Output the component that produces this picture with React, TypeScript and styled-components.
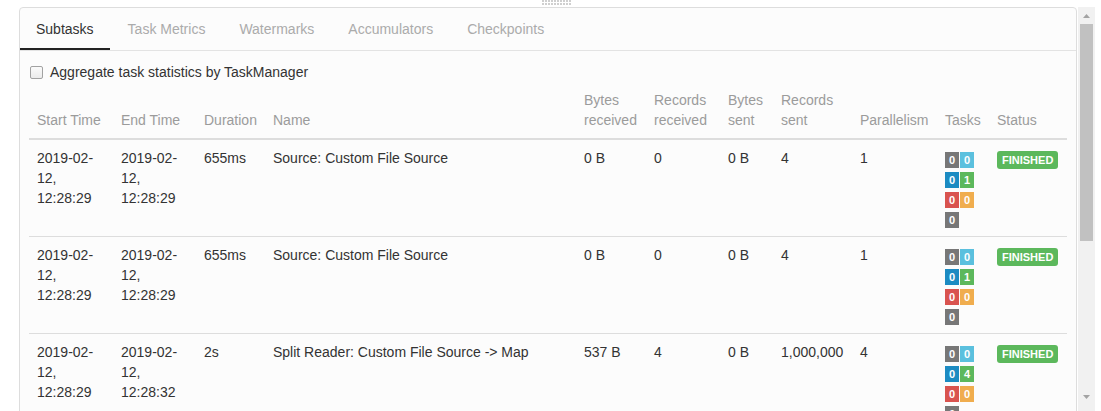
import styled, { createGlobalStyle } from "styled-components";

const GlobalStyle = createGlobalStyle`
  html, body {
    margin: 0;
    padding: 0;
    background: #ffffff;
  }
  body {
    font-family: "Liberation Sans", Arial, sans-serif;
    font-size: 14px;
    color: #333333;
  }
`;

type TaskCount = { color: string; value: number };

type Subtask = {
  start: string[];
  end: string[];
  duration: string;
  name: string;
  bytesIn: string;
  recordsIn: string;
  bytesOut: string;
  recordsOut: string;
  parallelism: string;
  tasks: TaskCount[];
  status: string;
};

const GRAY = "#777777";
const INFO = "#5bc0de";
const BLUE = "#1c8bc2";
const GREEN = "#5cb85c";
const RED = "#d9534f";
const ORANGE = "#f0ad4e";

const taskCounts = (running: number): TaskCount[] => [
  { color: GRAY, value: 0 },
  { color: INFO, value: 0 },
  { color: BLUE, value: 0 },
  { color: GREEN, value: running },
  { color: RED, value: 0 },
  { color: ORANGE, value: 0 },
  { color: GRAY, value: 0 },
];

const tabs: string[] = [
  "Subtasks",
  "Task Metrics",
  "Watermarks",
  "Accumulators",
  "Checkpoints",
];

const columns: { label: string[]; width: number }[] = [
  { label: ["Start Time"], width: 84 },
  { label: ["End Time"], width: 83 },
  { label: ["Duration"], width: 69 },
  { label: ["Name"], width: 311 },
  { label: ["Bytes", "received"], width: 70 },
  { label: ["Records", "received"], width: 74 },
  { label: ["Bytes", "sent"], width: 53 },
  { label: ["Records", "sent"], width: 79 },
  { label: ["Parallelism"], width: 85 },
  { label: ["Tasks"], width: 52 },
  { label: ["Status"], width: 78 },
];

const subtasks: Subtask[] = [
  {
    start: ["2019-02-", "12,", "12:28:29"],
    end: ["2019-02-", "12,", "12:28:29"],
    duration: "655ms",
    name: "Source: Custom File Source",
    bytesIn: "0 B",
    recordsIn: "0",
    bytesOut: "0 B",
    recordsOut: "4",
    parallelism: "1",
    tasks: taskCounts(1),
    status: "FINISHED",
  },
  {
    start: ["2019-02-", "12,", "12:28:29"],
    end: ["2019-02-", "12,", "12:28:29"],
    duration: "655ms",
    name: "Source: Custom File Source",
    bytesIn: "0 B",
    recordsIn: "0",
    bytesOut: "0 B",
    recordsOut: "4",
    parallelism: "1",
    tasks: taskCounts(1),
    status: "FINISHED",
  },
  {
    start: ["2019-02-", "12,", "12:28:29"],
    end: ["2019-02-", "12,", "12:28:32"],
    duration: "2s",
    name: "Split Reader: Custom File Source -> Map",
    bytesIn: "537 B",
    recordsIn: "4",
    bytesOut: "0 B",
    recordsOut: "1,000,000",
    parallelism: "4",
    tasks: taskCounts(4),
    status: "FINISHED",
  },
];

function Grip() {
  const dots = [];
  for (let r = 0; r < 2; r++) {
    for (let c = 0; c < 10; c++) {
      dots.push(
        <rect key={`${r}-${c}`} x={c * 3} y={r * 3} width={2} height={2} fill="#cfcfcf" />
      );
    }
  }
  return (
    <GripSvg width="30" height="5" viewBox="0 0 30 5">
      {dots}
    </GripSvg>
  );
}

function Arrow({ up }: { up: boolean }) {
  return (
    <svg width="7" height="4" viewBox="0 0 7 4">
      <polygon points={up ? "0,4 7,4 3.5,0" : "0,0 7,0 3.5,4"} fill="#a3a3a3" />
    </svg>
  );
}

export default function App() {
  return (
    <>
      <GlobalStyle />
      <Page>
        <HandleRow>
          <Grip />
        </HandleRow>
        <Body>
          <Viewport>
            <Panel>
              <TabBar>
                {tabs.map((tab, i) => (
                  <Tab key={tab} active={i === 0}>
                    {tab}
                  </Tab>
                ))}
              </TabBar>

              <Content>
                <CheckRow>
                  <CheckBox type="checkbox" />
                  <span>Aggregate task statistics by TaskManager</span>
                </CheckRow>

                <Table>
                  <colgroup>
                    {columns.map((col, i) => (
                      <col key={i} style={{ width: col.width }} />
                    ))}
                  </colgroup>
                  <thead>
                    <tr>
                      {columns.map((col, i) => (
                        <Th key={i}>
                          {col.label.map((line) => (
                            <Line key={line}>{line}</Line>
                          ))}
                        </Th>
                      ))}
                    </tr>
                  </thead>
                  <tbody>
                    {subtasks.map((row, i) => (
                      <Tr key={i}>
                        <Td>
                          {row.start.map((line) => (
                            <Line key={line}>{line}</Line>
                          ))}
                        </Td>
                        <Td>
                          {row.end.map((line) => (
                            <Line key={line}>{line}</Line>
                          ))}
                        </Td>
                        <Td>{row.duration}</Td>
                        <Td>{row.name}</Td>
                        <Td>{row.bytesIn}</Td>
                        <Td>{row.recordsIn}</Td>
                        <Td>{row.bytesOut}</Td>
                        <Td>{row.recordsOut}</Td>
                        <Td>{row.parallelism}</Td>
                        <Td>
                          <TaskGrid>
                            {row.tasks.map((t, j) => (
                              <TaskBadge key={j} color={t.color}>
                                {t.value}
                              </TaskBadge>
                            ))}
                          </TaskGrid>
                        </Td>
                        <Td>
                          <StatusBadge>{row.status}</StatusBadge>
                        </Td>
                      </Tr>
                    ))}
                  </tbody>
                </Table>
              </Content>
            </Panel>
          </Viewport>

          <ScrollBar>
            <ScrollButton>
              <Arrow up />
            </ScrollButton>
            <ScrollTrack>
              <Thumb />
            </ScrollTrack>
            <ScrollButton>
              <Arrow up={false} />
            </ScrollButton>
          </ScrollBar>
        </Body>
      </Page>
    </>
  );
}

// Styled Components

const Page = styled.div`
  width: 1101px;
  height: 411px;
  display: flex;
  flex-direction: column;
  overflow: hidden;
  background: #ffffff;
`;

const HandleRow = styled.div`
  height: 7px;
  flex: 0 0 7px;
  display: flex;
  align-items: flex-start;
  padding-left: 542px;
`;

const GripSvg = styled.svg`
  display: block;
`;

const Body = styled.div`
  flex: 1;
  min-height: 0;
  display: flex;
`;

const Viewport = styled.div`
  width: 1078px;
  flex: 0 0 1078px;
  overflow: hidden;
  padding-left: 19px;
  box-sizing: border-box;
`;

const Panel = styled.section`
  width: 1058px;
  box-sizing: border-box;
  border: 1px solid #dddddd;
  border-radius: 4px;
  background: #fcfcfc;
`;

const TabBar = styled.nav`
  display: flex;
  height: 43px;
  box-sizing: border-box;
  border-bottom: 1px solid #e3e3e3;
`;

const Tab = styled.div<{ active: boolean }>`
  height: 42px;
  line-height: 42px;
  padding: 0 16px;
  margin-right: 2px;
  font-size: 14px;
  color: ${({ active }) => (active ? "#333333" : "#ababab")};
  box-shadow: ${({ active }) => (active ? "inset 0 -2px 0 #222222" : "none")};
  cursor: pointer;
  white-space: nowrap;
`;

const Content = styled.div`
  padding: 0 9px;
`;

const CheckRow = styled.label`
  display: flex;
  align-items: center;
  gap: 7px;
  height: 20px;
  margin-top: 11px;
  padding-left: 1px;
  font-size: 14px;
  color: #333333;
`;

const CheckBox = styled.input`
  appearance: none;
  margin: 0;
  width: 13px;
  height: 13px;
  box-sizing: border-box;
  border: 1px solid #a2a2a2;
  border-radius: 2px;
  background: linear-gradient(#fbfbfb, #ebebeb);
`;

const Table = styled.table`
  width: 1038px;
  table-layout: fixed;
  border-collapse: collapse;
  font-size: 14px;
  line-height: 20px;
`;

const Th = styled.th`
  padding: 8px;
  text-align: left;
  vertical-align: bottom;
  font-weight: normal;
  color: #9b9b9b;
  white-space: nowrap;
  border-bottom: 2px solid #dddddd;
`;

const Tr = styled.tr`
  & + & td {
    border-top: 1px solid #dddddd;
  }
`;

const Td = styled.td`
  padding: 8px;
  vertical-align: top;
  color: #333333;
  white-space: nowrap;
`;

const Line = styled.span`
  display: block;
`;

const TaskGrid = styled.div`
  display: flex;
  flex-wrap: wrap;
  width: 29px;
  column-gap: 1px;
  row-gap: 4px;
  padding-top: 4px;
`;

const TaskBadge = styled.span<{ color: string }>`
  display: block;
  width: 14px;
  height: 16px;
  line-height: 16px;
  text-align: center;
  font-size: 11px;
  font-weight: 700;
  color: #ffffff;
  background: ${({ color }) => color};
`;

const StatusBadge = styled.span`
  display: inline-block;
  margin-top: 3px;
  height: 18px;
  line-height: 18px;
  padding: 0 5px;
  border-radius: 3px;
  font-size: 11px;
  font-weight: 700;
  color: #ffffff;
  background: #5cb85c;
`;

const ScrollBar = styled.div`
  width: 17px;
  flex: 0 0 17px;
  display: flex;
  flex-direction: column;
  background: #f1f1f1;
  padding-bottom: 6px;
  box-sizing: border-box;
`;

const ScrollButton = styled.div`
  height: 17px;
  flex: 0 0 17px;
  display: flex;
  align-items: center;
  justify-content: center;
`;

const ScrollTrack = styled.div`
  flex: 1;
  padding: 0 2px;
`;

const Thumb = styled.div`
  height: 217px;
  background: #c1c1c1;
`;
